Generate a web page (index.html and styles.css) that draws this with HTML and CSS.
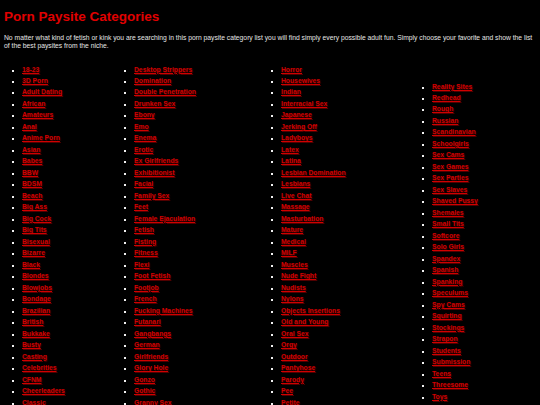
FILE: index.html
```html
<!DOCTYPE html>
<html lang="en">
<head>
<meta charset="utf-8">
<title>Porn Paysite Categories</title>
<link rel="stylesheet" href="styles.css">
</head>
<body>
<h1 class="title">Porn Paysite Categories</h1>
<p class="intro">No matter what kind of fetish or kink you are searching in this porn paysite category list you will find simply every possible adult fun. Simply choose your favorite and show the list of the best paysites from the niche.</p>
<div class="cats">
  <ul class="cat-list">
    <li><a href="#">18-23</a></li>
    <li><a href="#">3D Porn</a></li>
    <li><a href="#">Adult Dating</a></li>
    <li><a href="#">African</a></li>
    <li><a href="#">Amateurs</a></li>
    <li><a href="#">Anal</a></li>
    <li><a href="#">Anime Porn</a></li>
    <li><a href="#">Asian</a></li>
    <li><a href="#">Babes</a></li>
    <li><a href="#">BBW</a></li>
    <li><a href="#">BDSM</a></li>
    <li><a href="#">Beach</a></li>
    <li><a href="#">Big Ass</a></li>
    <li><a href="#">Big Cock</a></li>
    <li><a href="#">Big Tits</a></li>
    <li><a href="#">Bisexual</a></li>
    <li><a href="#">Bizarre</a></li>
    <li><a href="#">Black</a></li>
    <li><a href="#">Blondes</a></li>
    <li><a href="#">Blowjobs</a></li>
    <li><a href="#">Bondage</a></li>
    <li><a href="#">Brazilian</a></li>
    <li><a href="#">British</a></li>
    <li><a href="#">Bukkake</a></li>
    <li><a href="#">Busty</a></li>
    <li><a href="#">Casting</a></li>
    <li><a href="#">Celebrities</a></li>
    <li><a href="#">CFNM</a></li>
    <li><a href="#">Cheerleaders</a></li>
    <li><a href="#">Classic</a></li>
    <li><a href="#">College</a></li>
    <li><a href="#">Cosplay</a></li>
  </ul>
  <ul class="cat-list">
    <li><a href="#">Desktop Strippers</a></li>
    <li><a href="#">Domination</a></li>
    <li><a href="#">Double Penetration</a></li>
    <li><a href="#">Drunken Sex</a></li>
    <li><a href="#">Ebony</a></li>
    <li><a href="#">Emo</a></li>
    <li><a href="#">Enema</a></li>
    <li><a href="#">Erotic</a></li>
    <li><a href="#">Ex Girlfriends</a></li>
    <li><a href="#">Exhibitionist</a></li>
    <li><a href="#">Facial</a></li>
    <li><a href="#">Family Sex</a></li>
    <li><a href="#">Feet</a></li>
    <li><a href="#">Female Ejaculation</a></li>
    <li><a href="#">Fetish</a></li>
    <li><a href="#">Fisting</a></li>
    <li><a href="#">Fitness</a></li>
    <li><a href="#">Flexi</a></li>
    <li><a href="#">Foot Fetish</a></li>
    <li><a href="#">Footjob</a></li>
    <li><a href="#">French</a></li>
    <li><a href="#">Fucking Machines</a></li>
    <li><a href="#">Futanari</a></li>
    <li><a href="#">Gangbangs</a></li>
    <li><a href="#">German</a></li>
    <li><a href="#">Girlfriends</a></li>
    <li><a href="#">Glory Hole</a></li>
    <li><a href="#">Gonzo</a></li>
    <li><a href="#">Gothic</a></li>
    <li><a href="#">Granny Sex</a></li>
    <li><a href="#">Group Sex</a></li>
    <li><a href="#">Hairy</a></li>
  </ul>
  <ul class="cat-list">
    <li><a href="#">Horror</a></li>
    <li><a href="#">Housewives</a></li>
    <li><a href="#">Indian</a></li>
    <li><a href="#">Interracial Sex</a></li>
    <li><a href="#">Japanese</a></li>
    <li><a href="#">Jerking Off</a></li>
    <li><a href="#">Ladyboys</a></li>
    <li><a href="#">Latex</a></li>
    <li><a href="#">Latina</a></li>
    <li><a href="#">Lesbian Domination</a></li>
    <li><a href="#">Lesbians</a></li>
    <li><a href="#">Live Chat</a></li>
    <li><a href="#">Massage</a></li>
    <li><a href="#">Masturbation</a></li>
    <li><a href="#">Mature</a></li>
    <li><a href="#">Medical</a></li>
    <li><a href="#">MILF</a></li>
    <li><a href="#">Muscles</a></li>
    <li><a href="#">Nude Fight</a></li>
    <li><a href="#">Nudists</a></li>
    <li><a href="#">Nylons</a></li>
    <li><a href="#">Objects Insertions</a></li>
    <li><a href="#">Old and Young</a></li>
    <li><a href="#">Oral Sex</a></li>
    <li><a href="#">Orgy</a></li>
    <li><a href="#">Outdoor</a></li>
    <li><a href="#">Pantyhose</a></li>
    <li><a href="#">Parody</a></li>
    <li><a href="#">Pee</a></li>
    <li><a href="#">Petite</a></li>
    <li><a href="#">Pornstars</a></li>
    <li><a href="#">POV</a></li>
  </ul>
  <ul class="cat-list cat-list--offset">
    <li><a href="#">Reality Sites</a></li>
    <li><a href="#">Redhead</a></li>
    <li><a href="#">Rough</a></li>
    <li><a href="#">Russian</a></li>
    <li><a href="#">Scandinavian</a></li>
    <li><a href="#">Schoolgirls</a></li>
    <li><a href="#">Sex Cams</a></li>
    <li><a href="#">Sex Games</a></li>
    <li><a href="#">Sex Parties</a></li>
    <li><a href="#">Sex Slaves</a></li>
    <li><a href="#">Shaved Pussy</a></li>
    <li><a href="#">Shemales</a></li>
    <li><a href="#">Small Tits</a></li>
    <li><a href="#">Softcore</a></li>
    <li><a href="#">Solo Girls</a></li>
    <li><a href="#">Spandex</a></li>
    <li><a href="#">Spanish</a></li>
    <li><a href="#">Spanking</a></li>
    <li><a href="#">Speculums</a></li>
    <li><a href="#">Spy Cams</a></li>
    <li><a href="#">Squirting</a></li>
    <li><a href="#">Stockings</a></li>
    <li><a href="#">Strapon</a></li>
    <li><a href="#">Students</a></li>
    <li><a href="#">Submission</a></li>
    <li><a href="#">Teens</a></li>
    <li><a href="#">Threesome</a></li>
    <li><a href="#">Toys</a></li>
    <li><a href="#">Vintage</a></li>
    <li><a href="#">Voyeur</a></li>
  </ul>
</div>
</body>
</html>
```

FILE: styles.css
```css
html {
  background: #000;
}

body {
  margin: 0;
  padding: 4px;
  background: #000;
  color: #e6e6e6;
  font-family: "Liberation Sans", Arial, sans-serif;
}

.title {
  margin: 5px 0 0;
  font-size: 13.5px;
  line-height: 15.5px;
  font-weight: bold;
  color: #e00000;
}

.intro {
  margin: 9px 0 0;
  font-size: 6.75px;
  line-height: 8px;
  color: #e6e6e6;
}

.cats {
  display: grid;
  grid-template-columns: 112px 147px 151px 1fr;
  align-items: start;
  margin-top: 14px;
  padding-left: 14px;
}

.cat-list {
  margin: 0;
  padding: 0 0 0 4px;
  list-style: square outside;
  font-size: 6.75px;
  line-height: 11.48px;
  color: #f0f0f0;
}

.cat-list--offset {
  margin-top: 17px;
}

.cat-list li::marker {
  font-size: 6px;
}

.cat-list a {
  color: #d00000;
  font-weight: bold;
  text-decoration: underline;
  text-shadow: 1px 1px 1px #500000;
}
```
